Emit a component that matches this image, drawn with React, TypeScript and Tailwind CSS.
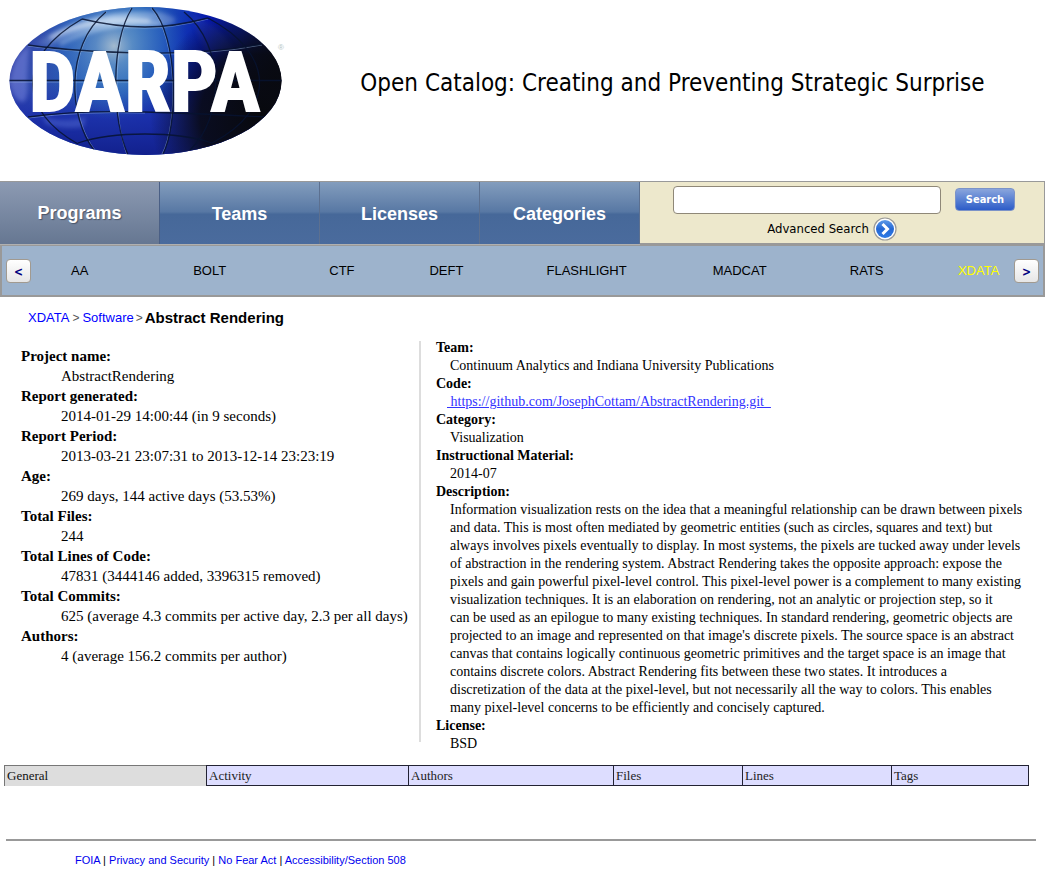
import { Fragment } from "react";

const sections = ["Programs", "Teams", "Licenses", "Categories"];
const programs = ["AA", "BOLT", "CTF", "DEFT", "FLASHLIGHT", "MADCAT", "RATS", "XDATA"];
const reportTabs = ["General", "Activity", "Authors", "Files", "Lines", "Tags"];
const footerLinks = ["FOIA", "Privacy and Security", "No Fear Act", "Accessibility/Section 508"];

const stats: [string, string][] = [
  ["Project name:", "AbstractRendering"],
  ["Report generated:", "2014-01-29 14:00:44 (in 9 seconds)"],
  ["Report Period:", "2013-03-21 23:07:31 to 2013-12-14 23:23:19"],
  ["Age:", "269 days, 144 active days (53.53%)"],
  ["Total Files:", "244"],
  ["Total Lines of Code:", "47831 (3444146 added, 3396315 removed)"],
  ["Total Commits:", "625 (average 4.3 commits per active day, 2.3 per all days)"],
  ["Authors:", "4 (average 156.2 commits per author)"],
];

const description = [
  "Information visualization rests on the idea that a meaningful relationship can be drawn between pixels and data. This is most often mediated by geometric entities (such as circles, squares and text) but always involves pixels eventually to display. In most systems, the pixels are tucked away under levels of abstraction in the rendering system. Abstract Rendering takes the opposite approach: expose the pixels and gain powerful pixel-level control. This pixel-level power is a complement to many existing visualization techniques. It is an elaboration on rendering, not an analytic or projection step, so it",
  "can be used as an epilogue to many existing techniques. In standard rendering, geometric objects are projected to an image and represented on that image's discrete pixels. The source space is an abstract canvas that contains logically continuous geometric primitives and the target space is an image that contains discrete colors. Abstract Rendering fits between these two states. It introduces a discretization of the data at the pixel-level, but not necessarily all the way to colors. This enables many pixel-level concerns to be efficiently and concisely captured.",
];

function Logo() {
  return (
    <svg width="300" height="164" viewBox="0 0 300 164" role="img" aria-label="DARPA">
      <defs>
        <linearGradient id="base" x1="0" y1="0.42" x2="1" y2="0.52">
          <stop offset="0" stopColor="#3a45a8" />
          <stop offset="0.2" stopColor="#2a52b0" />
          <stop offset="0.42" stopColor="#2864b4" />
          <stop offset="0.57" stopColor="#1238b4" />
          <stop offset="0.66" stopColor="#0618ac" />
          <stop offset="0.78" stopColor="#0a1c88" />
          <stop offset="0.9" stopColor="#0e1230" />
          <stop offset="1" stopColor="#0b0c14" />
        </linearGradient>
        <linearGradient id="lower" x1="0" y1="0" x2="0" y2="1">
          <stop offset="0.5" stopColor="#1c2cae" stopOpacity="0" />
          <stop offset="0.72" stopColor="#1a2ca8" stopOpacity="0.9" />
          <stop offset="0.95" stopColor="#12208c" />
        </linearGradient>
        <radialGradient id="glow" cx="114" cy="46" r="74" gradientUnits="userSpaceOnUse">
          <stop offset="0" stopColor="#b8cad4" stopOpacity="0.85" />
          <stop offset="0.25" stopColor="#6c9ccc" stopOpacity="0.7" />
          <stop offset="0.65" stopColor="#3a7ac8" stopOpacity="0.45" />
          <stop offset="1" stopColor="#2a62b8" stopOpacity="0" />
        </radialGradient>
        <radialGradient id="shade" cx="262" cy="116" r="112" gradientUnits="userSpaceOnUse">
          <stop offset="0" stopColor="#08090d" />
          <stop offset="0.55" stopColor="#08090f" stopOpacity="0.88" />
          <stop offset="1" stopColor="#080a18" stopOpacity="0" />
        </radialGradient>
        <linearGradient id="sheen" x1="40" y1="50" x2="190" y2="16" gradientUnits="userSpaceOnUse">
          <stop offset="0" stopColor="#ffffff" stopOpacity="0.1" />
          <stop offset="0.5" stopColor="#d8ecff" stopOpacity="0.6" />
          <stop offset="1" stopColor="#ffffff" stopOpacity="0.1" />
        </linearGradient>
        <filter id="soft" x="-20%" y="-50%" width="140%" height="200%">
          <feGaussianBlur stdDeviation="2" />
        </filter>
        <clipPath id="oval">
          <ellipse cx="145.5" cy="81" rx="136" ry="74" />
        </clipPath>
      </defs>
      <g clipPath="url(#oval)">
        <rect width="300" height="164" fill="url(#base)" />
        <rect width="300" height="164" fill="url(#lower)" />
        <rect width="300" height="164" fill="url(#glow)" />
        <path d="M34 44 Q86 8 160 12 Q188 20 166 26 Q96 20 50 46 Z" fill="url(#sheen)" filter="url(#soft)" />
        <path d="M50 38 Q92 16 150 21" fill="none" stroke="#fff" strokeOpacity="0.75" strokeWidth="2.5" filter="url(#soft)" />
        <path d="M60 44 Q104 22 160 24" fill="none" stroke="#eaf6ff" strokeOpacity="0.6" strokeWidth="2" filter="url(#soft)" />
        <path d="M42 116 Q66 124 86 117 L84 127 Q64 130 46 124 Z" fill="#6a84e4" opacity="0.35" filter="url(#soft)" />
        <path d="M10 84 Q13 54 29 46 L27 78 Q29 96 24 102 Q14 102 10 84Z" fill="#8e9cf0" opacity="0.4" filter="url(#soft)" />
        <path d="M192 14 Q226 30 234 52 L206 52 Q196 34 192 14Z" fill="#3044a0" opacity="0.3" filter="url(#soft)" />
        <rect width="300" height="164" fill="url(#shade)" />
        <g fill="none" stroke="#a9c8ee" strokeWidth="1" strokeOpacity="0.45">
          <path d="M9 82 H174" />
          <path d="M28 46 Q80 53 145 54 T262 45" />
          <path d="M82 20 Q116 28 145 28 T208 19" />
          <path d="M28 118 Q80 111 145 113" />
          <path d="M131 8 C113 44 113 118 127 155" />
          <path d="M151 8 C178 38 178 125 162 154" />
          <path d="M107 12 C65 46 70 118 95 150" />
        </g>
        <g fill="none" stroke="#071330" strokeWidth="1.3" strokeOpacity="0.85">
          <path d="M9 80.5 H282" />
          <path d="M28 45 Q80 52 145 53 T262 44" />
          <path d="M82 19 Q116 27 145 27 T208 18" />
          <path d="M28 117 Q80 110 145 112 T264 117" />
          <path d="M78 143 Q105 134 145 134 T212 143" />
          <path d="M132 8 C110 44 112 118 128 155" />
          <path d="M152 8 C179 38 178 125 163 154" />
          <path d="M106 12 C64 46 69 118 94 150" />
          <path d="M184 12 C226 46 224 118 190 150" />
          <path d="M82 19 C14 58 20 112 78 144" />
          <path d="M208 18 C276 54 276 110 212 143" />
        </g>
      </g>
      <text
        x="29"
        y="111"
        fill="#fff"
        stroke="#fff"
        strokeWidth="2"
        className="font-['Liberation_Sans_Narrow','Roboto_Condensed','Liberation_Sans'] text-[83px] font-bold"
      >
        DARPA
      </text>
      <text x="278" y="50" fill="#b4c4c4" className="font-['Liberation_Sans'] text-[8px]">
        ®
      </text>
    </svg>
  );
}

function AdvancedIcon() {
  return (
    <svg width="24" height="24" viewBox="0 0 24 24" aria-hidden="true">
      <defs>
        <linearGradient id="disc" x1="0" y1="0" x2="0" y2="1">
          <stop offset="0" stopColor="#5e9ae8" />
          <stop offset="0.5" stopColor="#2468d4" />
          <stop offset="1" stopColor="#2f7be6" />
        </linearGradient>
      </defs>
      <circle cx="12" cy="12" r="11" fill="#fff" stroke="#9a9a98" strokeWidth="1.2" />
      <circle cx="12" cy="12" r="9" fill="url(#disc)" />
      <path d="M9.5 7 L14.5 12 L9.5 17" fill="none" stroke="#fff" strokeWidth="3" />
    </svg>
  );
}

const arrowClass =
  "flex h-6 w-[25px] shrink-0 items-center justify-center rounded-[4px] border border-[#a19a90] bg-linear-to-b from-white to-[#e6e6e6] pt-[2px] font-['DejaVu_Sans_Condensed','DejaVu_Sans',sans-serif] text-[12px] font-bold leading-none text-[#000080]";

export default function App() {
  return (
    <div className="min-w-0 bg-white text-black">
      <header className="flex h-[181px] items-start">
        <a href="#home" className="shrink-0">
          <Logo />
        </a>
        <h1 className="flex-1 pt-[67px] text-center font-['DejaVu_Sans_Condensed','DejaVu_Sans',sans-serif] text-[24px] leading-[32px]">
          Open Catalog: Creating and Preventing Strategic Surprise
        </h1>
      </header>

      <div className="flex h-[64px] border-t border-[#999999] font-['Liberation_Sans',Arial,sans-serif]">
        <nav aria-label="Sections" className="flex w-[640px] shrink-0 border-b border-[#b0b0b0]">
          {sections.map((name, i) => (
            <a
              key={name}
              href={`#${name.toLowerCase()}`}
              className={
                i === 0
                  ? "flex flex-1 items-center justify-center border-r border-[#4a5f85] bg-linear-to-b from-[#8c9ab2] to-[#667792] text-[18px] font-bold text-white [text-shadow:1px_1px_1px_#4a5568]"
                  : "flex flex-1 items-center justify-center border-r border-[#5c7090] bg-[linear-gradient(#839dbd,#5878a4_48%,#466899_52%,#4a6b9d)] pt-[2px] text-[18px] font-bold text-white"
              }
            >
              {name}
            </a>
          ))}
        </nav>
        <form className="flex flex-1 justify-center gap-[14px] border-r border-b-2 border-[#999999] bg-[#ede8cc] pt-1 pl-1 font-['DejaVu_Sans_Condensed','DejaVu_Sans',sans-serif]">
          <div className="flex w-[268px] flex-col items-center">
            <input
              type="text"
              aria-label="Search the catalog"
              className="h-7 w-full rounded-[4px] border border-[#8f8878] bg-white px-2 text-[13px]"
            />
            <a href="#advanced" className="flex items-center gap-1 pt-[3px] pl-[50px] text-[13px] leading-6 text-black">
              Advanced Search
              <AdvancedIcon />
            </a>
          </div>
          <button
            type="button"
            className="mt-[2px] h-[23px] w-[60px] rounded-[4px] border border-[#7c93c8] bg-linear-to-b from-[#8aa5dc] to-[#2d5cc8] font-['DejaVu_Sans_Condensed','DejaVu_Sans',sans-serif] text-[11px] font-bold leading-none text-white"
          >
            Search
          </button>
        </form>
      </div>

      <nav
        aria-label="Programs"
        className="flex h-[52px] items-center border-2 border-t border-[#999999] bg-[#9db3cc] px-1 font-['Liberation_Sans',Arial,sans-serif] text-[13px]"
      >
        <button type="button" aria-label="Previous programs" className={arrowClass}>
          &lt;
        </button>
        <ul className="ml-10 grid flex-1 grid-cols-[122fr_136fr_100fr_117fr_166fr_137fr_108fr_56fr]">
          {programs.map((name) => (
            <li key={name} className="min-w-0">
              <a href={`#${name}`} className={name === "XDATA" ? "text-[#ffff00]" : "text-black"}>
                {name}
              </a>
            </li>
          ))}
        </ul>
        <button type="button" aria-label="Next programs" className={arrowClass}>
          &gt;
        </button>
      </nav>

      <nav
        aria-label="Breadcrumb"
        className="flex items-center pt-[9px] pl-7 font-['Liberation_Sans',Arial,sans-serif] text-[13px] leading-6"
      >
        <a href="#XDATA" className="text-[#0000ff]">XDATA</a>
        <span className="px-[3px] text-[12px] text-[#555555]">&gt;</span>
        <a href="#software" className="text-[#0000ff]">Software</a>
        <span className="px-[2px] text-[12px] text-[#555555]">&gt;</span>
        <h2 className="text-[15px] font-bold">Abstract Rendering</h2>
      </nav>

      <main className="flex pt-[9px] font-['Liberation_Serif','Times_New_Roman',serif]">
        <dl className="w-[419px] shrink-0 pt-[7px] pl-[21px] text-[15px] leading-5">
          {stats.map(([label, value]) => (
            <Fragment key={label}>
              <dt className="font-bold">{label}</dt>
              <dd className="pl-10 whitespace-nowrap">{value}</dd>
            </Fragment>
          ))}
        </dl>
        <div className="mt-[2px] mb-[11px] w-[2px] shrink-0 bg-[#dddddd]" />
        <dl className="min-w-0 flex-1 pr-5 pl-[15px] text-[14px] leading-[18px]">
          <dt className="font-bold">Team:</dt>
          <dd className="pl-[14px]">Continuum Analytics and Indiana University Publications</dd>
          <dt className="font-bold">Code:</dt>
          <dd className="pl-[11px]">
            <a
              href="https://github.com/JosephCottam/AbstractRendering.git"
              className="text-[#3333ff] underline"
            >
              &nbsp;https://github.com/JosephCottam/AbstractRendering.git&nbsp;&nbsp;
            </a>
          </dd>
          <dt className="font-bold">Category:</dt>
          <dd className="pl-[14px]">Visualization</dd>
          <dt className="font-bold">Instructional Material:</dt>
          <dd className="pl-[14px]">2014-07</dd>
          <dt className="font-bold">Description:</dt>
          <dd className="pl-[14px]">
            {description[0]}
            <br />
            {description[1]}
          </dd>
          <dt className="font-bold">License:</dt>
          <dd className="pl-[14px]">BSD</dd>
        </dl>
      </main>

      <nav
        aria-label="Report"
        className="mt-3 mr-4 ml-1 grid grid-cols-[202fr_202fr_205fr_129fr_149fr_138fr] font-['Liberation_Serif','Times_New_Roman',serif] text-[13px] leading-[19px]"
      >
        {reportTabs.map((name, i) => (
          <a
            key={name}
            href={`#${name.toLowerCase()}`}
            className={
              i === 0
                ? "border-t border-l border-[#777777] bg-[#dddddd] px-[2px] text-[#111111]"
                : "border-y border-l border-[#222233] bg-[#ddddff] px-[2px] text-[#222222] last:border-r"
            }
          >
            {name}
          </a>
        ))}
      </nav>

      <footer className="mr-[9px] ml-[6px] mt-[53px] border-t-2 border-t-[#999999] pt-[11px] pl-[69px] font-['Liberation_Sans',Arial,sans-serif] text-[11px] leading-4">
        {footerLinks.map((name, i) => (
          <Fragment key={name}>
            {i > 0 && " | "}
            <a href={`#footer-${i}`} className="text-[#0000ee]">{name}</a>
          </Fragment>
        ))}
      </footer>
    </div>
  );
}
